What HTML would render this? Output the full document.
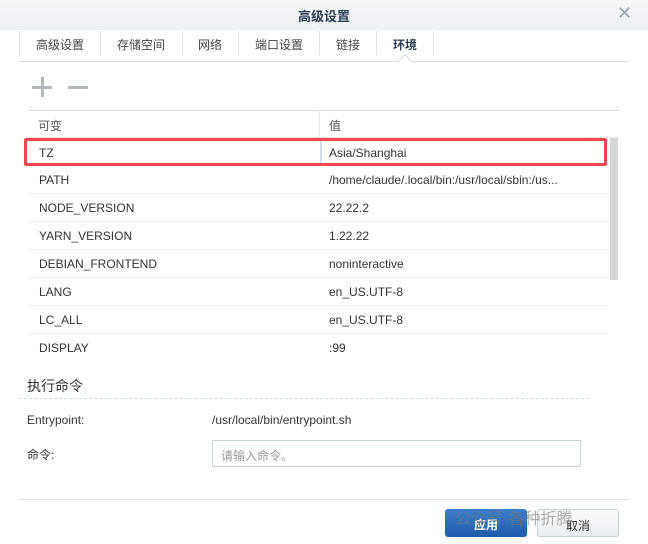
<!DOCTYPE html>
<html><head><meta charset="utf-8"><style>
*{margin:0;padding:0;box-sizing:border-box}
body{width:648px;height:544px;background:#fff;font-family:"Liberation Sans","Noto Sans CJK SC",sans-serif;font-size:12px;color:#333;position:relative;overflow:hidden}
.a{position:absolute}
.hdr{left:0;top:0;width:648px;height:30px;background:linear-gradient(#f4f6f8,#eef1f4)}
.row{left:28px;width:580px;height:28px;border-bottom:1px solid #edf0f3}
.row span{position:absolute;top:7px}
.sep{position:absolute;top:31px;height:24px;border-left:1px solid #dde2e7}
.tab{position:absolute;top:36px;white-space:nowrap;color:#444}
</style></head><body>
<div class="a hdr"></div>
<div class="a" style="left:0;width:648px;top:6px;text-align:center;font-size:13px;font-weight:bold;color:#2d3f55">高级设置</div>
<div class="a" style="left:617px;top:3px;font-size:18px;color:#9aa3ad">✕</div>
<div class="a" style="left:19px;top:61px;width:609px;border-top:1px solid #d8dde3"></div>
<div class="a" style="left:400px;top:56px;width:10px;height:10px;background:#fff;border-left:1px solid #d8dde3;border-top:1px solid #d8dde3;transform:rotate(45deg)"></div>
<div class="sep" style="left:19px"></div><div class="sep" style="left:100px"></div><div class="sep" style="left:182px"></div><div class="sep" style="left:238px"></div><div class="sep" style="left:319px"></div><div class="sep" style="left:376px"></div><div class="sep" style="left:433px"></div>
<div class="tab" style="left:36px">高级设置</div>
<div class="tab" style="left:117px">存储空间</div>
<div class="tab" style="left:198px">网络</div>
<div class="tab" style="left:255px">端口设置</div>
<div class="tab" style="left:336px">链接</div>
<div class="tab" style="left:393px;font-weight:bold;color:#2d3f55">环境</div>
<div class="a" style="left:32px;top:86px;width:20px;height:3px;background:#b3b8bd"></div>
<div class="a" style="left:40.5px;top:77px;width:3px;height:20px;background:#b3b8bd"></div>
<div class="a" style="left:68px;top:86px;width:20px;height:3px;background:#b3b8bd"></div>
<div class="a" style="left:29px;top:110px;width:590px;border-top:1px solid #d6dde5"></div>
<div class="a" style="left:28px;top:111px;width:590px;height:27px;border-bottom:1px solid #e3e7eb"></div>
<div class="a" style="left:38px;top:117px;color:#555">可变</div>
<div class="a" style="left:319px;top:111px;height:27px;border-left:1px solid #e3e7eb"></div>
<div class="a" style="left:329px;top:117px;color:#555">值</div>
<div class="a" style="left:610px;top:138px;width:8px;height:142px;background:#d4d6d8"></div>
<div class="a" style="left:320px;top:139px;width:286px;height:27px;background:#fff;border-left:2px solid #cfe0f2"></div>
<div class="a row" style="top:138px"><span style="left:11px;top:8px">TZ</span><span style="left:301px;top:8px">Asia/Shanghai</span></div>
<div class="a row" style="top:166px"><span style="left:11px">PATH</span><span style="left:301px">/home/claude/.local/bin:/usr/local/sbin:/us...</span></div>
<div class="a row" style="top:194px"><span style="left:11px">NODE_VERSION</span><span style="left:301px">22.22.2</span></div>
<div class="a row" style="top:222px"><span style="left:11px">YARN_VERSION</span><span style="left:301px">1.22.22</span></div>
<div class="a row" style="top:250px"><span style="left:11px">DEBIAN_FRONTEND</span><span style="left:301px">noninteractive</span></div>
<div class="a row" style="top:278px"><span style="left:11px">LANG</span><span style="left:301px">en_US.UTF-8</span></div>
<div class="a row" style="top:306px"><span style="left:11px">LC_ALL</span><span style="left:301px">en_US.UTF-8</span></div>
<div class="a row" style="top:334px;border:none"><span style="left:11px">DISPLAY</span><span style="left:301px">:99</span></div>
<div class="a" style="left:24px;top:138px;width:583px;height:28px;border:3px solid #f0464d;border-radius:2px"></div>
<div class="a" style="left:27px;top:376px;font-size:14px;color:#333">执行命令</div>
<div class="a" style="left:19px;top:398px;width:570px;border-top:1px dashed #cfdbe6"></div>
<div class="a" style="left:27px;top:413px">Entrypoint:</div>
<div class="a" style="left:212px;top:413px">/usr/local/bin/entrypoint.sh</div>
<div class="a" style="left:27px;top:446px">命令:</div>
<div class="a" style="left:212px;top:440px;width:369px;height:27px;border:1px solid #c9d3dc;padding:6px 0 0 8px;color:#999">请输入命令。</div>
<div class="a" style="left:18px;top:499px;width:610px;border-top:1px solid #dfe3e7"></div>
<div class="a" style="left:445px;top:509px;width:82px;height:28px;border-radius:3px;background:linear-gradient(#3a7fcc,#1f5ba8);color:#fff;text-align:center;padding-top:7px;font-weight:bold">应用</div>
<div class="a" style="left:537px;top:509px;width:82px;height:28px;border-radius:3px;border:1px solid #c8d0d8;background:linear-gradient(#fafbfc,#e9edf1);text-align:center;padding-top:7px">取消</div>
<div class="a" style="left:455px;top:505px;font-size:16px;color:rgba(120,120,120,.6);white-space:nowrap">公众号·各种折腾</div>
</body></html>
